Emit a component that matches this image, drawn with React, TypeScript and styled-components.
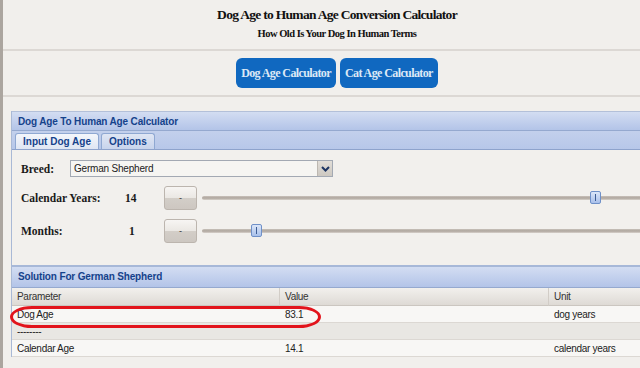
import React from 'react'
import styled, { createGlobalStyle } from 'styled-components'

type Row = {
  param: string,
  value: string,
  unit: string
}

const ROWS: Row[] = [
  { param: 'Dog Age', value: '83.1', unit: 'dog years' },
  { param: '--------', value: '', unit: '' },
  { param: 'Calendar Age', value: '14.1', unit: 'calendar years' },
]

const GlobalStyle = createGlobalStyle`
  html, body {
    margin: 0;
    padding: 0;
    background: #f1efec;
    overflow: hidden;
  }
  * { box-sizing: border-box; }
`

const Page = styled.div`
  width: 640px;
  height: 368px;
  border-left: 3px solid #aba59f;
  background: #f1efec;
  overflow: hidden;
`

const Header = styled.header`
  padding: 6px 0 0 31px;
  height: 49px;
  text-align: center;
  font-family: "Liberation Serif", serif;
  color: #111;
`

const Title = styled.h1`
  margin: 0;
  font-size: 13.5px;
  line-height: 17px;
  letter-spacing: -0.7px;
  font-weight: bold;
`

const Subtitle = styled.h2`
  margin: 4px 0 0;
  font-size: 10.5px;
  line-height: 13px;
  letter-spacing: -0.5px;
  font-weight: bold;
`

const Divider = styled.div`
  height: 2px;
  background: #dcd8d4;
`

const NavBar = styled.nav`
  display: flex;
  justify-content: center;
  gap: 4px;
  padding: 7px 0 0 31px;
  height: 44px;
`

const NavButton = styled.button`
  height: 30px;
  padding: 0 5px;
  border: none;
  border-radius: 6px;
  background: #1068c0;
  color: #dce8f6;
  font-family: "Liberation Serif", serif;
  font-weight: bold;
  font-size: 12px;
  letter-spacing: -0.6px;
`

const Panel = styled.section`
  margin: 14px 0 0 8px;
  width: 680px;
  border-left: 1px solid #a9b9d6;
  font-family: "Liberation Sans", Arial, sans-serif;
  font-size: 10px;
  color: #222;
`

const PanelHeader = styled.div`
  height: 20px;
  padding: 4px 0 0 6px;
  border-top: 1px solid #b3c0d9;
  border-bottom: 1px solid #95a9cf;
  background: linear-gradient(#d3ddf2, #b3c4e8);
  color: #15428b;
  font-weight: bold;
  font-size: 10px;
  letter-spacing: -0.15px;
`

const TabStrip = styled.div`
  display: flex;
  align-items: flex-end;
  gap: 2px;
  height: 19px;
  padding-left: 3px;
  background: linear-gradient(#c3d0ec, #b7c7e9);
  border-bottom: 1px solid #8ea3cc;
`

const Tab = styled.div<{ $active?: boolean }>`
  height: 16px;
  padding: 2px 7px 0;
  border: 1px solid #8fa8d2;
  border-bottom: none;
  border-radius: 3px 3px 0 0;
  background: ${p => p.$active ? 'linear-gradient(#f4f6fb, #dfe6f3)' : 'linear-gradient(#dfe6f4, #c8d4ec)'};
  color: #15428b;
  font-weight: bold;
  font-size: 10px;
`

const TabBody = styled.div`
  height: 117px;
  padding: 10px 0 0 9px;
  background: #f2f0ed;
  border-bottom: 2px solid #a7b8d8;
  display: flex;
  flex-direction: column;
`

const FieldRow = styled.div`
  display: flex;
  align-items: center;
  height: 17px;
`

const SliderRow = styled.div`
  display: flex;
  align-items: center;
  height: 24px;
  margin-top: 9px;
`

const Label = styled.span<{ $width: number }>`
  width: ${p => p.$width}px;
  font-family: "Liberation Serif", serif;
  font-weight: bold;
  font-size: 11.5px;
  color: #1a1a1a;
`

const Value = styled.span<{ $width: number }>`
  width: ${p => p.$width}px;
  font-family: "Liberation Serif", serif;
  font-weight: bold;
  font-size: 11.5px;
  color: #1a1a1a;
`

const Select = styled.div`
  display: flex;
  width: 263px;
  height: 17px;
  border: 1px solid #a3a9b3;
  background: #f6f5f2;
`

const SelectText = styled.span`
  flex: 1;
  padding: 2px 0 0 3px;
  font-size: 10px;
  letter-spacing: -0.2px;
  color: #222;
`

const SelectArrow = styled.span`
  width: 15px;
  display: flex;
  align-items: center;
  justify-content: center;
  background: linear-gradient(#e2ded8, #cdc8c1);
  border-left: 1px solid #bdb8b1;
`

const StepButton = styled.div`
  width: 33px;
  height: 24px;
  border: 1px solid #bcb5ae;
  border-radius: 3px;
  background: linear-gradient(#f7f5f3 0%, #ebe8e4 48%, #d3cec8 50%, #cdc7c1 100%);
  display: flex;
  align-items: center;
  justify-content: center;
  color: #333;
  font-size: 9px;
  line-height: 1;
`

const Track = styled.div`
  position: relative;
  flex: 1;
  margin-left: 5px;
  height: 4px;
  border-radius: 2px;
  background: linear-gradient(#c9c2bb, #aea59d 50%, #d8d2cc);
`

const Thumb = styled.div`
  position: absolute;
  top: -5px;
  width: 11px;
  height: 13px;
  border: 1px solid #6f90c8;
  border-radius: 2px;
  background: linear-gradient(#dbe6f8, #a9c0ea);

  &::after {
    content: '';
    position: absolute;
    left: 4px;
    top: 2px;
    width: 1px;
    height: 7px;
    background: #3d5d94;
  }
`

const SolutionHeader = styled(PanelHeader)`
  height: 21px;
  border-top: none;
`

const Table = styled.div`
  position: relative;
  display: grid;
  grid-template-columns: 268px 269px 1fr;
`

const HeadCell = styled.div`
  height: 18px;
  padding: 3px 0 0 5px;
  background: linear-gradient(#f2f0ed, #dedad5);
  border-bottom: 1px solid #cbc6c0;
  border-right: 1px solid #d2cdc7;
  color: #333;
  letter-spacing: -0.3px;
`

const Cell = styled.div<{ $alt?: boolean }>`
  height: 17px;
  padding: 3px 0 0 5px;
  background: ${p => p.$alt ? '#e9e7e3' : '#f8f7f5'};
  border-bottom: 1px solid #dcd8d3;
  color: #222;
  letter-spacing: -0.3px;
`

const Highlight = styled.div`
  position: absolute;
  left: -2px;
  top: 18px;
  width: 311px;
  height: 22px;
  border: 3px solid #e2141c;
  border-radius: 22px / 11px;
  pointer-events: none;
`

function Chevron() {
  return (
    <svg width='9' height='6' viewBox='0 0 9 6'>
      <path d='M1 1 L4.5 4.5 L8 1' stroke='#1e3563' strokeWidth='2' fill='none' />
    </svg>
  )
}

export default function App() {
  return (
    <Page>
      <GlobalStyle />
      <Header>
        <Title>Dog Age to Human Age Conversion Calculator</Title>
        <Subtitle>How Old Is Your Dog In Human Terms</Subtitle>
      </Header>
      <Divider />
      <NavBar>
        <NavButton>Dog Age Calculator</NavButton>
        <NavButton>Cat Age Calculator</NavButton>
      </NavBar>
      <Divider />
      <Panel>
        <PanelHeader>Dog Age To Human Age Calculator</PanelHeader>
        <TabStrip>
          <Tab $active>Input Dog Age</Tab>
          <Tab>Options</Tab>
        </TabStrip>
        <TabBody>
          <FieldRow>
            <Label $width={49}>Breed:</Label>
            <Select>
              <SelectText>German Shepherd</SelectText>
              <SelectArrow><Chevron /></SelectArrow>
            </Select>
          </FieldRow>
          <SliderRow>
            <Label $width={104}>Calendar Years:</Label>
            <Value $width={39}>14</Value>
            <StepButton>-</StepButton>
            <Track>
              <Thumb style={{ left: 388 }} />
            </Track>
          </SliderRow>
          <SliderRow>
            <Label $width={108}>Months:</Label>
            <Value $width={35}>1</Value>
            <StepButton>-</StepButton>
            <Track>
              <Thumb style={{ left: 49 }} />
            </Track>
          </SliderRow>
        </TabBody>
        <SolutionHeader>Solution For German Shepherd</SolutionHeader>
        <Table>
          <HeadCell>Parameter</HeadCell>
          <HeadCell>Value</HeadCell>
          <HeadCell>Unit</HeadCell>
          {ROWS.map((row, i) => (
            <React.Fragment key={i}>
              <Cell $alt={i % 2 === 1}>{row.param}</Cell>
              <Cell $alt={i % 2 === 1}>{row.value}</Cell>
              <Cell $alt={i % 2 === 1}>{row.unit}</Cell>
            </React.Fragment>
          ))}
          <Highlight />
        </Table>
      </Panel>
    </Page>
  )
}
